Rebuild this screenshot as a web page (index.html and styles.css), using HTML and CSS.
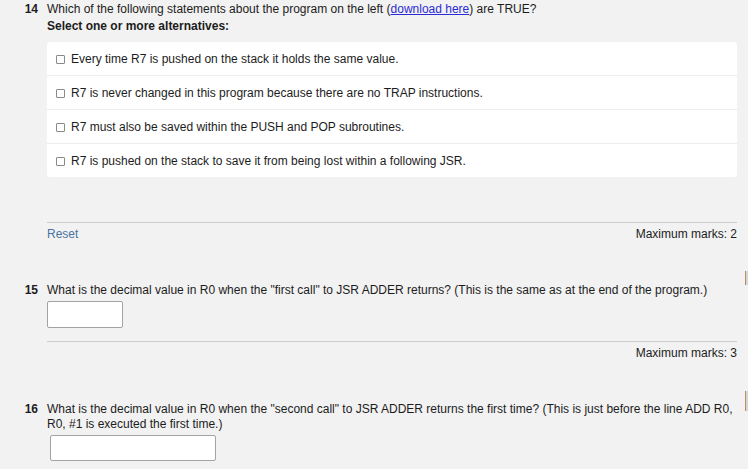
FILE: index.html
```html
<!DOCTYPE html>
<html>
<head>
<meta charset="utf-8">
<link rel="stylesheet" href="styles.css">
</head>
<body>
<div class="page">
  <section class="q q14">
    <div class="num">14</div>
    <div class="body">
      <div class="qtext">Which of the following statements about the program on the left (<a class="link" href="#">download here</a>) are TRUE?</div>
      <div class="prompt">Select one or more alternatives:</div>
      <div class="options">
        <label class="opt"><span class="box"></span>Every time R7 is pushed on the stack it holds the same value.</label>
        <label class="opt"><span class="box"></span>R7 is never changed in this program because there are no TRAP instructions.</label>
        <label class="opt"><span class="box"></span>R7 must also be saved within the PUSH and POP subroutines.</label>
        <label class="opt"><span class="box"></span>R7 is pushed on the stack to save it from being lost within a following JSR.</label>
      </div>
      <div class="foot"><a class="reset" href="#">Reset</a><span class="marks">Maximum marks: 2</span></div>
    </div>
  </section>

  <section class="q q15">
    <div class="num">15</div>
    <div class="body">
      <div class="qtext">What is the decimal value in R0 when the "first call" to JSR ADDER returns? (This is the same as at the end of the program.)</div>
      <div class="field short"></div>
      <div class="foot end"><span class="marks">Maximum marks: 3</span></div>
    </div>
  </section>

  <section class="q q16">
    <div class="num">16</div>
    <div class="body">
      <div class="qtext">What is the decimal value in R0 when the "second call" to JSR ADDER returns the first time? (This is just before the line ADD R0, R0, #1 is executed the first time.)</div>
      <div class="field long"></div>
    </div>
  </section>
  <div class="edge e1"></div>
  <div class="edge e2"></div>
</div>
</body>
</html>
```
FILE: styles.css
```css
html, body {
  margin: 0;
  padding: 0;
  background: #f2f2f2;
}
body {
  font-family: "Liberation Sans", Arial, sans-serif;
  font-size: 12px;
  line-height: 15px;
  color: #1c1c1c;
}
.page {
  position: relative;
  width: 748px;
  height: 469px;
  overflow: hidden;
  padding-top: 2px;
  box-sizing: border-box;
}
.q {
  display: grid;
  grid-template-columns: 47px 690px;
}
.num {
  font-weight: bold;
  text-align: right;
  padding-right: 9px;
}
.link {
  color: #2b2bd6;
  text-decoration: underline;
}
.prompt {
  font-weight: bold;
  margin-top: 2px;
}
.options {
  margin-top: 8px;
  background: #fff;
  border-radius: 3px;
}
.opt {
  display: flex;
  align-items: center;
  height: 32px;
  padding-top: 1px;
  padding-left: 9px;
  border-top: 1px solid #ececec;
}
.opt:first-child {
  border-top: none;
}
.box {
  width: 7px;
  height: 7px;
  border: 1px solid #8a8a8a;
  border-radius: 1px;
  background: #fff;
  margin-right: 6px;
  flex: none;
}
.foot {
  display: flex;
  justify-content: space-between;
  border-top: 1px solid #cdcdcd;
  padding-top: 4px;
}
.foot.end {
  justify-content: flex-end;
}
.q14 .foot {
  margin-top: 45px;
}
.reset {
  color: #4a72a0;
  text-decoration: none;
}
.q15 {
  margin-top: 41px;
}
.q16 {
  margin-top: 41px;
}
.field {
  background: #fff;
  border: 1px solid #a3a3a3;
  border-radius: 2px;
  box-sizing: border-box;
}
.field.short {
  width: 76px;
  height: 27px;
  margin-top: 3px;
  margin-bottom: 13px;
}
.field.long {
  width: 166px;
  height: 26px;
  margin-top: 3px;
  margin-left: 3px;
}
.edge {
  position: absolute;
  left: 745px;
  width: 3px;
  background: #d6d6d6;
  border-left: 1px solid #b89060;
  box-sizing: border-box;
}
.e1 { top: 271px; height: 14px; }
.e2 { top: 391px; height: 20px; }
```
